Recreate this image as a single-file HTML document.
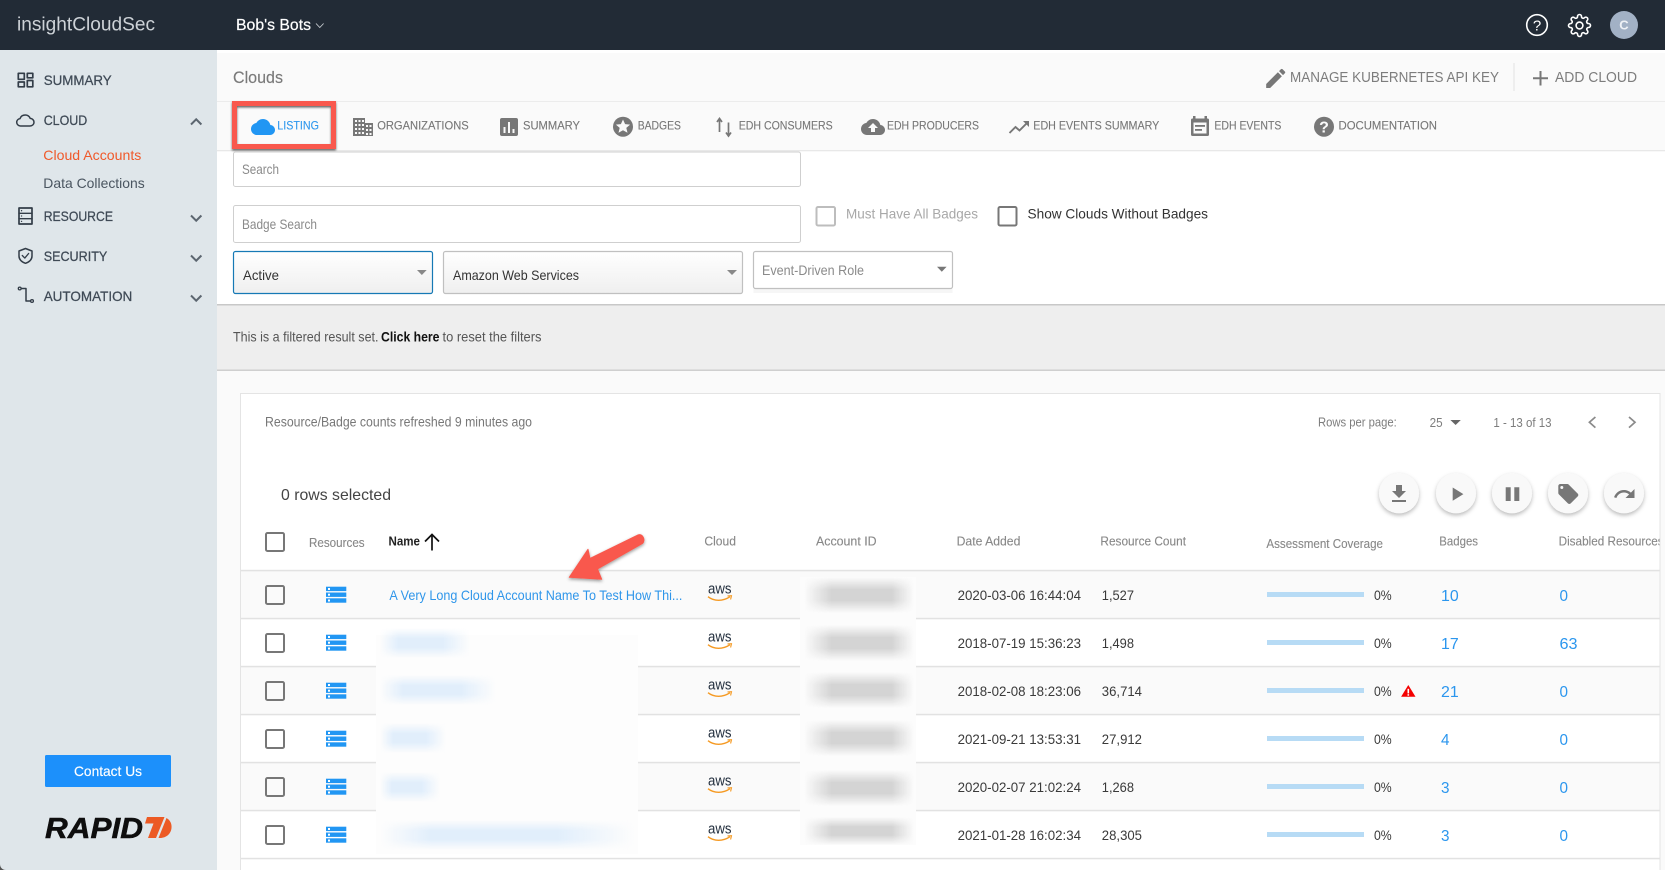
<!DOCTYPE html>
<html lang="en">
<head>
<meta charset="utf-8">
<title>Clouds - insightCloudSec</title>
<style>
html,body{margin:0;padding:0;width:1665px;height:870px;overflow:hidden;background:#fafafa}
svg{display:block}
text{font-family:"Liberation Sans",Arial,sans-serif}
.nav{font-size:14px;fill:#3f4a56;stroke:#3f4a56;stroke-width:.25}
.sub{font-size:14px;fill:#4a5560}
.tab{font-size:12px;fill:#777;stroke:#777;stroke-width:.12}
.ph{font-size:14px;fill:#8a8a8a}
.th{font-size:13px;fill:#888;stroke:#888;stroke-width:.12}
.td{font-size:14px;fill:#3a3a3a}
.num{font-size:16px;fill:#2b96ee}
.act{font-size:14.5px;fill:#7d7d7d}
.sm{font-size:12.5px;fill:#7d7d7d}
.ico{fill:none;stroke:#333d48;stroke-width:1.7;stroke-linecap:round;stroke-linejoin:round}
.chev{fill:none;stroke:#5c6670;stroke-width:2}
.g{fill:#777}
.w{fill:#fafafa}
.cb{fill:none;stroke:#777;stroke-width:2}
.line{fill:#e2e2e2}
</style>
</head>
<body>
<svg xmlns="http://www.w3.org/2000/svg" width="1665" height="870" viewBox="0 0 1665 870">
<defs>
<linearGradient id="blobG" x1="0" y1="0" x2="1" y2="0"><stop offset="0" stop-color="#d4d4d4" stop-opacity="0"/><stop offset=".25" stop-color="#d4d4d4"/><stop offset=".8" stop-color="#d4d4d4"/><stop offset="1" stop-color="#d4d4d4" stop-opacity="0"/></linearGradient>
<linearGradient id="blobB" x1="0" y1="0" x2="1" y2="0"><stop offset="0" stop-color="#e1eefb" stop-opacity="0"/><stop offset=".2" stop-color="#e1eefb"/><stop offset=".7" stop-color="#e1eefb"/><stop offset="1" stop-color="#e1eefb" stop-opacity="0"/></linearGradient>
<linearGradient id="vfG" x1="0" y1="0" x2="0" y2="1"><stop offset="0" stop-color="#000"/><stop offset=".35" stop-color="#fff"/><stop offset=".65" stop-color="#fff"/><stop offset="1" stop-color="#000"/></linearGradient>
<mask id="vf" maskUnits="objectBoundingBox" maskContentUnits="objectBoundingBox" x="0" y="0" width="1" height="1"><rect width="1" height="1" fill="url(#vfG)"/></mask>
<filter id="sh" x="-40%" y="-40%" width="180%" height="180%"><feDropShadow dx="0" dy="2" stdDeviation="2.2" flood-color="#000" flood-opacity=".28"/></filter>
<filter id="shr" x="-10%" y="-10%" width="120%" height="130%"><feDropShadow dx="0" dy="1.5" stdDeviation="1" flood-color="#000" flood-opacity=".6"/></filter>
<filter id="sha" x="-20%" y="-20%" width="140%" height="140%"><feDropShadow dx="0" dy="1.5" stdDeviation="1.5" flood-color="#000" flood-opacity=".4"/></filter>
<g id="srv">
  <rect x="0" y="0" width="20.3" height="4.4" fill="#2196f3"/><rect x="0" y="5.8" width="20.3" height="4.4" fill="#2196f3"/><rect x="0" y="11.6" width="20.3" height="4.4" fill="#2196f3"/>
  <rect x="2" y="1.3" width="2" height="2" fill="#fff"/><rect x="2" y="7" width="2" height="2" fill="#fff"/><rect x="2" y="12.8" width="2" height="2" fill="#fff"/>
</g>
<g id="aws">
  <path d="M0 3.2C6 8 15 8 22 3.2" fill="none" stroke="#f59a23" stroke-width="1.4"/>
  <path d="M19.5 2.4L23.5 2.2 22.6 6" fill="none" stroke="#f59a23" stroke-width="1.1"/>
</g>
<path id="cloud" d="M19.35 10.04C18.67 6.59 15.64 4 12 4 9.11 4 6.6 5.64 5.35 8.04 2.34 8.36 0 10.91 0 14c0 3.31 2.69 6 6 6h13c2.76 0 5-2.24 5-5 0-2.64-2.05-4.78-4.65-4.96z"/>
<g id="btn"><circle r="20" fill="#f9f9f9" filter="url(#sh)"/></g>
</defs>

<!-- page background -->
<rect width="1665" height="870" fill="#fafafa"/>

<!-- top bar -->
<rect width="1665" height="50" fill="#222b36"/>
<text x="17" y="30.5" font-size="19" fill="#cdd2d7" textLength="138" lengthAdjust="spacingAndGlyphs">insightCloudSec</text>
<text x="236" y="30" font-size="16" fill="#fff" stroke="#fff" stroke-width=".2" textLength="75" lengthAdjust="spacingAndGlyphs">Bob's Bots</text>
<path d="M316 23.500l3.800 4 3.800-4" fill="none" stroke="#c8cdd2" stroke-width=".9"/>
<circle cx="1537" cy="25" r="10.3" fill="none" stroke="#fff" stroke-width="1.6"/>
<text x="1537" y="30.5" font-size="15" fill="#fff" text-anchor="middle">?</text>
<g transform="translate(1567.5 13.5)" fill="none" stroke="#fff" stroke-width="1.6">
  <circle cx="12" cy="12" r="3.4"/>
  <path d="M19.4 15a1.65 1.65 0 0 0 .33 1.82l.06.06a2 2 0 0 1 0 2.83 2 2 0 0 1-2.83 0l-.06-.06a1.65 1.65 0 0 0-1.82-.33 1.65 1.65 0 0 0-1 1.51V21a2 2 0 0 1-2 2 2 2 0 0 1-2-2v-.09A1.65 1.65 0 0 0 9 19.4a1.65 1.65 0 0 0-1.82.33l-.06.06a2 2 0 0 1-2.83 0 2 2 0 0 1 0-2.83l.06-.06a1.65 1.65 0 0 0 .33-1.82 1.65 1.65 0 0 0-1.51-1H3a2 2 0 0 1-2-2 2 2 0 0 1 2-2h.09A1.65 1.65 0 0 0 4.6 9a1.65 1.65 0 0 0-.33-1.82l-.06-.06a2 2 0 0 1 0-2.83 2 2 0 0 1 2.83 0l.06.06a1.65 1.65 0 0 0 1.82.33H9a1.65 1.65 0 0 0 1-1.51V3a2 2 0 0 1 2-2 2 2 0 0 1 2 2v.09a1.65 1.65 0 0 0 1 1.51 1.65 1.65 0 0 0 1.82-.33l.06-.06a2 2 0 0 1 2.83 0 2 2 0 0 1 0 2.83l-.06.06a1.65 1.65 0 0 0-.33 1.82V9a1.65 1.65 0 0 0 1.51 1H21a2 2 0 0 1 2 2 2 2 0 0 1-2 2h-.09a1.65 1.65 0 0 0-1.51 1z"/>
</g>
<circle cx="1624" cy="25" r="14" fill="#a2b1c5"/>
<text x="1624" y="29.5" font-size="13" font-weight="bold" fill="#eef1f5" text-anchor="middle">C</text>

<!-- sidebar -->
<rect x="0" y="50" width="217" height="820" fill="#dfe6ea"/>
<g class="ico">
  <rect x="18.3" y="73.3" width="6" height="6"/><rect x="27.3" y="73.3" width="5.5" height="4.5"/><rect x="18.3" y="82" width="6" height="4.8"/><rect x="27.3" y="80.5" width="5.5" height="6.3"/>
  <path d="M21.5 126h8.5c2.3 0 4-1.7 4-3.8s-1.7-3.7-3.8-3.8c-.8-2-2.7-3.4-5-3.4-2.4 0-4.4 1.4-5.2 3.6-1.9.2-3.3 1.8-3.3 3.7 0 2 1.700 3.700 3.800 3.700z" stroke-width="1.5"/>
  <rect x="19" y="208" width="13" height="16" stroke-width="1.7"/><path d="M19 213.300h13M19 218.700h13" stroke-width="1.400"/><path d="M21.500 210.700h.1M21.500 216h.1M21.500 221.400h.1" stroke-width="1.300"/>
  <path d="M25.500 248.500l6.500 2.500v5c0 3.400-2.600 5.900-6.500 7.300-3.900-1.400-6.500-3.900-6.500-7.300v-5z" stroke-width="1.500"/><path d="M22.300 255.500l2.500 2.600 3.800-4.600" stroke-width="1.300"/>
  <circle cx="19.700" cy="288.500" r="1.400" stroke-width="1.300"/><circle cx="32" cy="301" r="1.400" stroke-width="1.300"/><path d="M21.500 288.500h4.500v12.500h4.400" stroke-width="1.500"/>
</g>
<text class="nav" x="43.7" y="85" textLength="68" lengthAdjust="spacingAndGlyphs">SUMMARY</text>
<text class="nav" x="43.7" y="125" textLength="43.6" lengthAdjust="spacingAndGlyphs">CLOUD</text>
<text x="43.3" y="160" font-size="14" fill="#f0592a" textLength="98" lengthAdjust="spacingAndGlyphs">Cloud Accounts</text>
<text class="sub" x="43.3" y="188" textLength="101.4" lengthAdjust="spacingAndGlyphs">Data Collections</text>
<text class="nav" x="43.7" y="221" textLength="69.3" lengthAdjust="spacingAndGlyphs">RESOURCE</text>
<text class="nav" x="43.7" y="261" textLength="63.6" lengthAdjust="spacingAndGlyphs">SECURITY</text>
<text class="nav" x="43.7" y="301" textLength="88.6" lengthAdjust="spacingAndGlyphs">AUTOMATION</text>
<path class="chev" d="M191 124.500l5.200-5.200 5.200 5.200M191 215.500l5.200 5.200 5.200-5.200M191 255.500l5.200 5.200 5.200-5.200M191 295.500l5.200 5.200 5.200-5.200"/>
<rect x="45" y="755" width="126" height="32" rx="1.500" fill="#1c90fb"/>
<text x="74" y="776" font-size="14" fill="#fff" stroke="#fff" stroke-width=".15" textLength="68" lengthAdjust="spacingAndGlyphs">Contact Us</text>
<text x="45" y="838" font-size="29" font-weight="bold" font-style="italic" fill="#0e0e0e" stroke="#0e0e0e" stroke-width=".5" textLength="98" lengthAdjust="spacingAndGlyphs">RAPID</text>
<path d="M147 817H164.500L156 838H148L153.500 823.500H145z" fill="#ec5a24"/>
<path d="M166.500 818C170 820 172 823.500 171.500 828 171 833.500 166.500 838 160 838H158.500z" fill="#ec5a24"/>
<path d="M0 870v-6c0 3 2 6 6 6z" fill="#555"/>

<!-- page header -->
<rect x="217" y="50" width="1448" height="3" fill="#fff"/>
<text x="233" y="83" font-size="17" fill="#7a7a7a" stroke="#7a7a7a" stroke-width=".15" textLength="50" lengthAdjust="spacingAndGlyphs">Clouds</text>
<path class="g" transform="translate(1263 65.700) scale(1.060)" d="M3 17.250V21h3.750L17.810 9.940l-3.750-3.750L3 17.250zM20.710 7.040c.39-.39.39-1.020 0-1.410l-2.340-2.340c-.39-.39-1.020-.39-1.410 0l-1.830 1.830 3.750 3.750 1.830-1.830z"/>
<text class="act" x="1290" y="82" textLength="209" lengthAdjust="spacingAndGlyphs">MANAGE KUBERNETES API KEY</text>
<rect x="1513.500" y="63" width="1" height="28" fill="#e2e2e2"/>
<path d="M1540.500 71v14.500M1533 78.200h15" stroke="#777" stroke-width="2" fill="none"/>
<text class="act" x="1555" y="82" textLength="82" lengthAdjust="spacingAndGlyphs">ADD CLOUD</text>

<!-- tab bar -->
<rect x="217" y="101" width="1448" height="1" fill="#ececec"/>
<rect x="217" y="102" width="1448" height="48" fill="#fafafa"/>
<rect x="217" y="150" width="1448" height="155" fill="#fff"/>
<rect x="217" y="150" width="1448" height="1.300" fill="#e8e8e8"/>

<use href="#cloud" transform="translate(251 115)" fill="#2196f3"/>
<text class="tab" style="fill:#2f98ee;stroke:#2f98ee" x="277.300" y="129.600" textLength="41.700" lengthAdjust="spacingAndGlyphs">LISTING</text>
<rect x="234.500" y="103.500" width="99" height="43" fill="none" stroke="#f9594d" stroke-width="5" filter="url(#shr)"/>

<g class="g">
  <path d="M353 118h12v5h8v13h-20z"/>
</g>
<g class="w">
  <rect x="355" y="120" width="2" height="2"/><rect x="358.500" y="120" width="2" height="2"/><rect x="362" y="120" width="2" height="2"/>
  <rect x="355" y="124" width="2" height="2"/><rect x="358.500" y="124" width="2" height="2"/><rect x="362" y="124" width="2" height="2"/><rect x="366" y="125" width="2" height="2"/><rect x="369.500" y="125" width="2" height="2"/>
  <rect x="355" y="128" width="2" height="2"/><rect x="358.500" y="128" width="2" height="2"/><rect x="362" y="128" width="2" height="2"/><rect x="366" y="129" width="2" height="2"/><rect x="369.500" y="129" width="2" height="2"/>
  <rect x="355" y="132" width="2" height="2"/><rect x="358.500" y="132" width="2" height="2"/><rect x="362" y="132" width="2" height="2"/><rect x="366" y="133" width="2" height="2"/><rect x="369.500" y="133" width="2" height="2"/>
</g>
<text class="tab" x="377.200" y="129.600" textLength="91.500" lengthAdjust="spacingAndGlyphs">ORGANIZATIONS</text>

<rect x="500" y="118" width="18" height="18" rx="2" fill="#777"/>
<g class="w"><rect x="503.500" y="127" width="2" height="6"/><rect x="508" y="122" width="2" height="11"/><rect x="512.500" y="129" width="2" height="4"/></g>
<text class="tab" x="523" y="129.600" textLength="57" lengthAdjust="spacingAndGlyphs">SUMMARY</text>

<circle cx="623" cy="126.700" r="10" fill="#777"/>
<path class="w" d="M623 119.500l2.100 4.600 5 .5-3.800 3.300 1.200 4.900-4.500-2.600-4.500 2.600 1.200-4.900-3.800-3.300 5-.5z"/>
<text class="tab" x="637.700" y="129.600" textLength="43.300" lengthAdjust="spacingAndGlyphs">BADGES</text>

<path d="M719.500 132v-12M717 122l2.500-3.500 2.500 3.500M728.500 122.500v12M726 132.500l2.500 3.500 2.500-3.500" stroke="#777" stroke-width="1.700" fill="none"/>
<text class="tab" x="738.700" y="129.600" textLength="94" lengthAdjust="spacingAndGlyphs">EDH CONSUMERS</text>

<use href="#cloud" transform="translate(861 115)" fill="#777"/>
<path class="w" d="M875 128v4h-4v-4h-3l5-5 5 5z"/>
<text class="tab" x="887" y="129.600" textLength="92" lengthAdjust="spacingAndGlyphs">EDH PRODUCERS</text>

<path d="M1009.500 133l6-6 4 3.500 8-8" stroke="#777" stroke-width="1.900" fill="none"/>
<path class="g" d="M1023 121h6v6z"/>
<text class="tab" x="1033.300" y="129.600" textLength="126" lengthAdjust="spacingAndGlyphs">EDH EVENTS SUMMARY</text>

<rect x="1191" y="118.500" width="18" height="17.500" rx="1.500" fill="#777"/>
<rect x="1193" y="116" width="2.500" height="4" class="g"/><rect x="1204.500" y="116" width="2.500" height="4" class="g"/>
<rect x="1193.500" y="122.500" width="13" height="11" fill="#fafafa"/>
<rect x="1195" y="125" width="10" height="1.800" class="g"/><rect x="1195" y="129" width="7" height="1.800" class="g"/>
<text class="tab" x="1214.400" y="129.600" textLength="67" lengthAdjust="spacingAndGlyphs">EDH EVENTS</text>

<circle cx="1324" cy="126.700" r="10" fill="#777"/>
<text x="1324" y="132.500" font-size="16" font-weight="bold" fill="#fafafa" text-anchor="middle">?</text>
<text class="tab" x="1338.500" y="129.600" textLength="98.500" lengthAdjust="spacingAndGlyphs">DOCUMENTATION</text>

<!-- filters -->
<rect x="233.500" y="152" width="567" height="34.500" rx="2" fill="#fff" stroke="#cfcfcf"/>
<text class="ph" x="242" y="173.800" textLength="37" lengthAdjust="spacingAndGlyphs">Search</text>
<rect x="233.500" y="205.500" width="567" height="37" rx="2" fill="#fff" stroke="#cfcfcf"/>
<text class="ph" x="242" y="229" textLength="75" lengthAdjust="spacingAndGlyphs">Badge Search</text>

<rect x="816.500" y="207" width="18.500" height="18.500" rx="1.500" fill="#fff" stroke="#bdbdbd" stroke-width="2"/>
<text x="846" y="218.700" font-size="14" fill="#a8a8a8" textLength="132" lengthAdjust="spacingAndGlyphs">Must Have All Badges</text>
<rect x="998.500" y="207" width="18" height="18.500" rx="1.500" class="cb"/>
<text x="1027.500" y="218.700" font-size="14" fill="#333" textLength="180.500" lengthAdjust="spacingAndGlyphs">Show Clouds Without Badges</text>

<linearGradient id="sel" x1="0" y1="0" x2="0" y2="1"><stop offset="0" stop-color="#fff"/><stop offset="1" stop-color="#efefef"/></linearGradient>
<rect x="233.500" y="251.500" width="199" height="42" rx="2" fill="url(#sel)" stroke="#1679b5" stroke-width="1.200"/>
<text x="243" y="280" font-size="14" fill="#333" textLength="36" lengthAdjust="spacingAndGlyphs">Active</text>
<path d="M417 270h9.700l-4.850 5z" fill="#888"/>
<rect x="443.500" y="251.500" width="299" height="42" rx="2" fill="url(#sel)" stroke="#c0c0c0" stroke-width="1.200"/>
<text x="453" y="280" font-size="14" fill="#333" textLength="126" lengthAdjust="spacingAndGlyphs">Amazon Web Services</text>
<path d="M727 270h10l-5 5z" fill="#888"/>
<rect x="753.500" y="289" width="199" height="4" fill="#f6f6f6"/>
<rect x="753.500" y="251.500" width="199" height="37" rx="2" fill="#fff" stroke="#c0c0c0" stroke-width="1.200"/>
<text class="ph" x="762" y="275" textLength="102" lengthAdjust="spacingAndGlyphs">Event-Driven Role</text>
<path d="M937 266.700h9.600l-4.800 5z" fill="#777"/>

<!-- notice band -->
<rect x="217" y="305" width="1448" height="65" fill="#eeeeee"/>
<rect x="217" y="304" width="1448" height="1.500" fill="#c8c8c8"/>
<rect x="217" y="369.500" width="1448" height="1.500" fill="#cfcfcf"/>
<text x="233" y="341.500" font-size="14" fill="#555" textLength="145.500" lengthAdjust="spacingAndGlyphs">This is a filtered result set.</text>
<text x="381" y="341.500" font-size="14" font-weight="bold" fill="#111" textLength="58.500" lengthAdjust="spacingAndGlyphs">Click here</text>
<text x="442.500" y="341.500" font-size="14" fill="#555" textLength="99" lengthAdjust="spacingAndGlyphs">to reset the filters</text>

<!-- card -->
<rect x="240.500" y="393.500" width="1419.500" height="477" fill="#fff" stroke="#e4e4e4"/>
<text x="265" y="426.700" font-size="14" fill="#777" textLength="267" lengthAdjust="spacingAndGlyphs">Resource/Badge counts refreshed 9 minutes ago</text>
<text class="sm" x="1318" y="426.700" textLength="78.800" lengthAdjust="spacingAndGlyphs">Rows per page:</text>
<text class="sm" x="1429.600" y="427" textLength="13" lengthAdjust="spacingAndGlyphs">25</text>
<path d="M1450.400 420h10.400l-5.200 5z" fill="#666"/>
<text class="sm" x="1493.400" y="427" textLength="58.200" lengthAdjust="spacingAndGlyphs">1 - 13 of 13</text>
<path d="M1595.400 417l-6 5.300 6 5.300M1629 417l6 5.300-6 5.300" fill="none" stroke="#8a8a8a" stroke-width="1.700"/>
<text x="281" y="499.800" font-size="16" fill="#444" textLength="110" lengthAdjust="spacingAndGlyphs">0 rows selected</text>

<use href="#btn" x="1399" y="493.300"/><use href="#btn" x="1456" y="493.300"/><use href="#btn" x="1512" y="493.300"/><use href="#btn" x="1568" y="493.300"/><use href="#btn" x="1624" y="493.300"/>
<path class="g" transform="translate(1387 482)" d="M19 9h-4V3H9v6H5l7 7 7-7zM5 18v2h14v-2H5z"/>
<path class="g" d="M1452.700 487.500l10.700 6.600-10.700 6.600z"/>
<path class="g" d="M1505.700 487.300h5v13.700h-5zM1514.300 487.300h5v13.700h-5z"/>
<path class="g" transform="translate(1556.300 482)" d="M21.410 11.580l-9-9C12.050 2.220 11.550 2 11 2H4c-1.100 0-2 .9-2 2v7c0 .55.22 1.050.59 1.420l9 9c.36.36.86.58 1.410.58.55 0 1.050-.22 1.410-.59l7-7c.37-.36.59-.86.59-1.410 0-.55-.23-1.060-.59-1.420z"/>
<circle cx="1561.800" cy="487.500" r="1.500" fill="#f9f9f9"/>
<path class="g" transform="translate(1612.500 482)" d="M18.400 10.600C16.550 8.990 14.150 8 11.500 8c-4.650 0-8.580 3.030-9.960 7.220L3.900 16c1.050-3.190 4.050-5.500 7.600-5.500 1.950 0 3.730.72 5.120 1.880L13 16h9V7l-3.600 3.600z"/>

<!-- table head -->
<rect class="cb" x="266" y="533" width="18" height="18" rx="1.500"/>
<text class="th" style="font-size:12.500px" x="309" y="547.200" textLength="55.600" lengthAdjust="spacingAndGlyphs">Resources</text>
<text x="388.500" y="545.500" font-size="13" font-weight="bold" fill="#222" textLength="31.500" lengthAdjust="spacingAndGlyphs">Name</text>
<path d="M432 550.500v-15M425 541.500l7-7 7 7" fill="none" stroke="#111" stroke-width="1.700"/>
<text class="th" x="704.400" y="545.500" textLength="31.600" lengthAdjust="spacingAndGlyphs">Cloud</text>
<text class="th" x="816" y="545.500" textLength="60.600" lengthAdjust="spacingAndGlyphs">Account ID</text>
<text class="th" x="956.600" y="545.500" textLength="63.800" lengthAdjust="spacingAndGlyphs">Date Added</text>
<text class="th" x="1100.400" y="545.500" textLength="85.600" lengthAdjust="spacingAndGlyphs">Resource Count</text>
<text class="th" x="1266.400" y="548" textLength="116.600" lengthAdjust="spacingAndGlyphs">Assessment Coverage</text>
<text class="th" x="1439.300" y="545.500" textLength="38.700" lengthAdjust="spacingAndGlyphs">Badges</text>
<text class="th" x="1558.600" y="545.500" textLength="105" lengthAdjust="spacingAndGlyphs">Disabled Resources</text>

<!-- striped rows -->
<rect x="241" y="571" width="1419" height="47" fill="#fafafa"/>
<rect x="241" y="667" width="1419" height="47" fill="#fafafa"/>
<rect x="241" y="763" width="1419" height="47" fill="#fafafa"/>
<rect class="line" x="241" y="569.800" width="1419" height="1.500"/>
<rect class="line" x="241" y="617.800" width="1419" height="1.500"/>
<rect class="line" x="241" y="665.800" width="1419" height="1.500"/>
<rect class="line" x="241" y="713.800" width="1419" height="1.500"/>
<rect class="line" x="241" y="761.800" width="1419" height="1.500"/>
<rect class="line" x="241" y="809.800" width="1419" height="1.500"/>
<rect class="line" x="241" y="857.800" width="1419" height="1.500"/>

<!-- redaction patches -->
<rect x="376" y="635" width="262" height="219" fill="#fdfdfd"/>
<rect x="800" y="577" width="116" height="268" fill="#fcfcfc"/>
<g fill="url(#blobB)">
  <rect x="380" y="628" width="90" height="30" mask="url(#vf)"/>
  <rect x="380" y="675" width="116" height="30" mask="url(#vf)"/>
  <rect x="380" y="723" width="66" height="30" mask="url(#vf)"/>
  <rect x="380" y="772" width="60" height="30" mask="url(#vf)"/>
  <rect x="380" y="820" width="254" height="30" mask="url(#vf)"/>
</g>
<g fill="url(#blobG)">
  <rect x="804" y="577" width="110" height="36" mask="url(#vf)"/>
  <rect x="804" y="625" width="110" height="36" mask="url(#vf)"/>
  <rect x="804" y="672" width="110" height="36" mask="url(#vf)"/>
  <rect x="804" y="720" width="110" height="36" mask="url(#vf)"/>
  <rect x="804" y="770" width="110" height="36" mask="url(#vf)"/>
  <rect x="804" y="817" width="110" height="28" mask="url(#vf)"/>
</g>

<!-- row 1 -->
<rect class="cb" x="266" y="586" width="18" height="18" rx="1.500"/>
<use href="#srv" x="326" y="586.700"/>
<text x="389.400" y="600" font-size="14" fill="#2f96ea" textLength="293" lengthAdjust="spacingAndGlyphs">A Very Long Cloud Account Name To Test How Thi...</text>
<text x="708" y="593.500" font-size="15" fill="#232f3e" textLength="23.500" lengthAdjust="spacingAndGlyphs">aws</text><use href="#aws" x="708" y="593.500"/>
<text class="td" x="957.600" y="600" textLength="123.400" lengthAdjust="spacingAndGlyphs">2020-03-06 16:44:04</text>
<text class="td" x="1101.800" y="600" textLength="32.200" lengthAdjust="spacingAndGlyphs">1,527</text>
<rect x="1267" y="592" width="97" height="5" fill="#b7dbf5"/>
<text class="td" x="1374" y="600" textLength="17.700" lengthAdjust="spacingAndGlyphs">0%</text>
<text class="num" x="1441" y="601" textLength="17.700" lengthAdjust="spacingAndGlyphs">10</text>
<text class="num" x="1559.500" y="601" textLength="8.500" lengthAdjust="spacingAndGlyphs">0</text>

<!-- row 2 -->
<rect class="cb" x="266" y="634" width="18" height="18" rx="1.500"/>
<use href="#srv" x="326" y="634.700"/>
<text x="708" y="641.500" font-size="15" fill="#232f3e" textLength="23.500" lengthAdjust="spacingAndGlyphs">aws</text><use href="#aws" x="708" y="641.500"/>
<text class="td" x="957.600" y="648" textLength="123.400" lengthAdjust="spacingAndGlyphs">2018-07-19 15:36:23</text>
<text class="td" x="1101.800" y="648" textLength="32.200" lengthAdjust="spacingAndGlyphs">1,498</text>
<rect x="1267" y="640" width="97" height="5" fill="#b7dbf5"/>
<text class="td" x="1374" y="648" textLength="17.700" lengthAdjust="spacingAndGlyphs">0%</text>
<text class="num" x="1441" y="649" textLength="17.700" lengthAdjust="spacingAndGlyphs">17</text>
<text class="num" x="1559.500" y="649" textLength="18" lengthAdjust="spacingAndGlyphs">63</text>

<!-- row 3 -->
<rect class="cb" x="266" y="682" width="18" height="18" rx="1.500"/>
<use href="#srv" x="326" y="682.700"/>
<text x="708" y="689.500" font-size="15" fill="#232f3e" textLength="23.500" lengthAdjust="spacingAndGlyphs">aws</text><use href="#aws" x="708" y="689.500"/>
<text class="td" x="957.600" y="696" textLength="123.400" lengthAdjust="spacingAndGlyphs">2018-02-08 18:23:06</text>
<text class="td" x="1101.800" y="696" textLength="40.200" lengthAdjust="spacingAndGlyphs">36,714</text>
<rect x="1267" y="688" width="97" height="5" fill="#b7dbf5"/>
<text class="td" x="1374" y="696" textLength="17.700" lengthAdjust="spacingAndGlyphs">0%</text>
<path d="M1408.300 685l7.200 11.800h-14.400z" fill="#f40000"/><rect x="1407.500" y="688.800" width="1.600" height="4.600" fill="#fff"/><rect x="1407.500" y="694.200" width="1.600" height="1.500" fill="#fff"/>
<text class="num" x="1441" y="697" textLength="17.700" lengthAdjust="spacingAndGlyphs">21</text>
<text class="num" x="1559.500" y="697" textLength="8.500" lengthAdjust="spacingAndGlyphs">0</text>

<!-- row 4 -->
<rect class="cb" x="266" y="730" width="18" height="18" rx="1.500"/>
<use href="#srv" x="326" y="730.700"/>
<text x="708" y="737.500" font-size="15" fill="#232f3e" textLength="23.500" lengthAdjust="spacingAndGlyphs">aws</text><use href="#aws" x="708" y="737.500"/>
<text class="td" x="957.600" y="744" textLength="123.400" lengthAdjust="spacingAndGlyphs">2021-09-21 13:53:31</text>
<text class="td" x="1101.800" y="744" textLength="40.200" lengthAdjust="spacingAndGlyphs">27,912</text>
<rect x="1267" y="736" width="97" height="5" fill="#b7dbf5"/>
<text class="td" x="1374" y="744" textLength="17.700" lengthAdjust="spacingAndGlyphs">0%</text>
<text class="num" x="1441" y="745" textLength="8.500" lengthAdjust="spacingAndGlyphs">4</text>
<text class="num" x="1559.500" y="745" textLength="8.500" lengthAdjust="spacingAndGlyphs">0</text>

<!-- row 5 -->
<rect class="cb" x="266" y="778" width="18" height="18" rx="1.500"/>
<use href="#srv" x="326" y="778.700"/>
<text x="708" y="785.500" font-size="15" fill="#232f3e" textLength="23.500" lengthAdjust="spacingAndGlyphs">aws</text><use href="#aws" x="708" y="785.500"/>
<text class="td" x="957.600" y="792" textLength="123.400" lengthAdjust="spacingAndGlyphs">2020-02-07 21:02:24</text>
<text class="td" x="1101.800" y="792" textLength="32.200" lengthAdjust="spacingAndGlyphs">1,268</text>
<rect x="1267" y="784" width="97" height="5" fill="#b7dbf5"/>
<text class="td" x="1374" y="792" textLength="17.700" lengthAdjust="spacingAndGlyphs">0%</text>
<text class="num" x="1441" y="793" textLength="8.500" lengthAdjust="spacingAndGlyphs">3</text>
<text class="num" x="1559.500" y="793" textLength="8.500" lengthAdjust="spacingAndGlyphs">0</text>

<!-- row 6 -->
<rect class="cb" x="266" y="826" width="18" height="18" rx="1.500"/>
<use href="#srv" x="326" y="826.700"/>
<text x="708" y="833.500" font-size="15" fill="#232f3e" textLength="23.500" lengthAdjust="spacingAndGlyphs">aws</text><use href="#aws" x="708" y="833.500"/>
<text class="td" x="957.600" y="840" textLength="123.400" lengthAdjust="spacingAndGlyphs">2021-01-28 16:02:34</text>
<text class="td" x="1101.800" y="840" textLength="40.200" lengthAdjust="spacingAndGlyphs">28,305</text>
<rect x="1267" y="832" width="97" height="5" fill="#b7dbf5"/>
<text class="td" x="1374" y="840" textLength="17.700" lengthAdjust="spacingAndGlyphs">0%</text>
<text class="num" x="1441" y="841" textLength="8.500" lengthAdjust="spacingAndGlyphs">3</text>
<text class="num" x="1559.500" y="841" textLength="8.500" lengthAdjust="spacingAndGlyphs">0</text>

<!-- right gutter clips overflowing header -->
<rect x="1660" y="371" width="5" height="499" fill="#fafafa"/>
<rect x="1659.500" y="393" width="1" height="477" fill="#e4e4e4"/>

<!-- annotation arrow -->
<path d="M569.300 577.300L588 549.300 590 558.500 638 535C642.500 533 646 540 642.500 543.500L597.500 569 601.700 579.300z" fill="#f9594d" stroke="#f9594d" stroke-width="1" stroke-linejoin="round" filter="url(#sha)"/>
</svg>
</body>
</html>
